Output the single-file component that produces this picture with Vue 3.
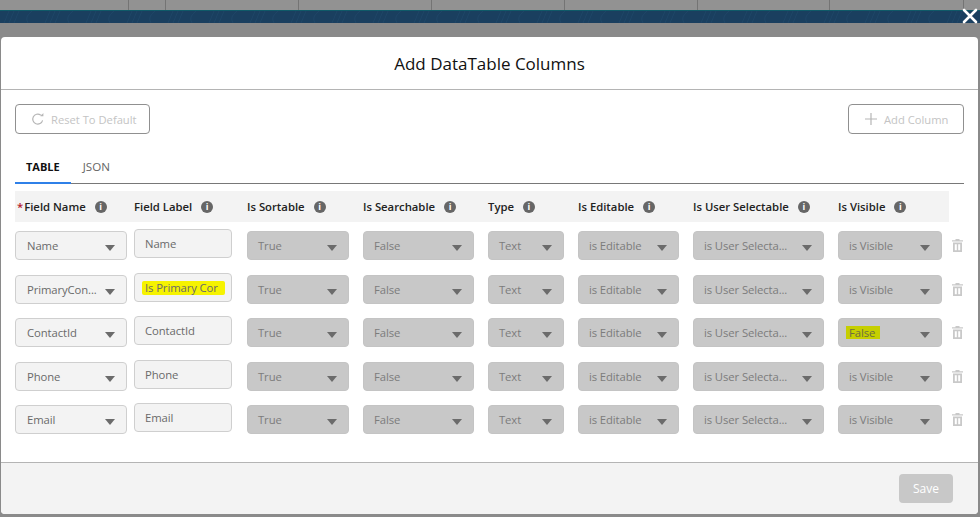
<script setup>
const stripCells = [129, 37, 133, 133, 133, 133, 132, 134]

const headers = [
  { label: 'Field Name', required: true },
  { label: 'Field Label' },
  { label: 'Is Sortable' },
  { label: 'Is Searchable' },
  { label: 'Type' },
  { label: 'Is Editable' },
  { label: 'Is User Selectable' },
  { label: 'Is Visible' },
]

const rows = [
  { name: 'Name', label: 'Name', visible: 'is Visible' },
  { name: 'PrimaryCon...', label: 'Is Primary Cor', mark: true, visible: 'is Visible' },
  { name: 'ContactId', label: 'ContactId', visible: 'False', markVisible: true },
  { name: 'Phone', label: 'Phone', visible: 'is Visible' },
  { name: 'Email', label: 'Email', visible: 'is Visible' },
]
</script>

<template>
  <div class="page">
    <div class="strip">
      <div v-for="(w, i) in stripCells" :key="i" class="strip-cell" :style="{ width: w + 'px' }"></div>
    </div>
    <div class="band">
      <svg width="980" height="12" viewBox="0 0 980 12" fill="none" stroke="#1f4667" stroke-width="1">
        <path v-for="x in 24" :key="x" :d="`M${(x - 1) * 41 + 4} 12l5-12M${(x - 1) * 41 + 9} 12l5-12M${(x - 1) * 41 + 14} 12l5-12M${(x - 1) * 41 + 28} 12q-4-6 4-12`" />
      </svg>
    </div>

    <svg class="close" width="18" height="18" viewBox="0 0 18 18" stroke="#fff" stroke-width="2.6" stroke-linecap="round">
      <path d="M3 3l12 12M15 3L3 15" />
    </svg>

    <div class="modal">
      <header class="modal-head">Add DataTable Columns</header>

      <div class="modal-body">
        <div class="actions">
          <button class="btn btn-reset">
            <svg width="14" height="14" viewBox="0 0 14 14" fill="none" stroke="#b5b5b5" stroke-width="1.2">
              <path d="M11.6 8.4A5 5 0 1 1 9.6 3L12 3.4" />
              <path d="M12.4 1v3.2H9.4" fill="#b5b5b5" stroke="none" />
            </svg>
            Reset To Default
          </button>
          <button class="btn btn-add">
            <svg width="12" height="12" viewBox="0 0 12 12" stroke="#b5b5b5" stroke-width="1.2">
              <path d="M6 0v12M0 6h12" />
            </svg>
            Add Column
          </button>
        </div>

        <div class="tabs">
          <div class="tab active">TABLE</div>
          <div class="tab">JSON</div>
        </div>

        <div class="table-head">
          <div v-for="h in headers" :key="h.label" class="th">
            <span v-if="h.required" class="req">*</span>{{ h.label }}
            <span class="info">i</span>
          </div>
        </div>

        <div v-for="row in rows" :key="row.name" class="row">
          <div class="sel sel-light"><span>{{ row.name }}</span><i class="caret"></i></div>
          <div class="inp"><span :class="{ mark: row.mark }">{{ row.label }}</span></div>
          <div class="sel"><span>True</span><i class="caret"></i></div>
          <div class="sel"><span>False</span><i class="caret"></i></div>
          <div class="sel"><span>Text</span><i class="caret"></i></div>
          <div class="sel"><span>is Editable</span><i class="caret"></i></div>
          <div class="sel"><span>is User Selecta...</span><i class="caret"></i></div>
          <div class="sel sel-last"><span :class="{ 'mark-dim': row.markVisible }">{{ row.visible }}</span><i class="caret"></i></div>
          <svg class="trash" width="11" height="13" viewBox="0 0 11 13" fill="#c9c9c9">
            <path d="M3.5 0h4v1.2h3.5v1.3H0V1.2h3.5zM1 3.4h9V13H1zM2.8 5.2v6h2v-6zM6.2 5.2v6h2v-6z" fill-rule="evenodd" />
          </svg>
        </div>
      </div>

      <footer class="modal-foot">
        <button class="btn-save">Save</button>
      </footer>
    </div>
  </div>
</template>

<style>
body {
  margin: 0;
  background: #8a8a8a;
}
</style>

<style scoped>
.page {
  position: relative;
  width: 980px;
  height: 517px;
  overflow: hidden;
  background: #8a8a8a;
  font-family: "Open Sans", "Noto Sans", sans-serif;
  color: #5c5c5c;
}
.strip {
  display: flex;
  height: 10px;
  background: #929292;
}
.strip-cell {
  border-right: 1px solid #747474;
  box-sizing: border-box;
}
.band {
  height: 13px;
  box-sizing: border-box;
  border-top: 1px solid #0f5a68;
  background: #1a3f5f;
  overflow: hidden;
}
.band svg {
  display: block;
}
.close {
  position: absolute;
  top: 7px;
  right: 1px;
}
.modal {
  margin: 14px 1px 0 1px;
  width: 977px;
  height: 477px;
  display: flex;
  flex-direction: column;
  background: #fff;
  border-radius: 4px;
  overflow: hidden;
}
.modal-head {
  height: 53px;
  flex: none;
  box-sizing: border-box;
  border-bottom: 1px solid #b4b4b4;
  padding-top: 13px;
  text-align: center;
  font-size: 17px;
  line-height: 27px;
  color: #111;
}
.modal-body {
  flex: 1;
  padding: 14px 14px 0 14px;
}
.actions {
  display: flex;
  justify-content: space-between;
}
.btn {
  display: flex;
  align-items: center;
  height: 30px;
  box-sizing: border-box;
  background: #fff;
  border: 1px solid #909090;
  border-radius: 4px;
  color: #c4c4c4;
  font: inherit;
  font-size: 11.2px;
}
.btn-reset {
  width: 135px;
  padding: 0 0 0 15px;
  gap: 6px;
}
.btn-add {
  width: 116px;
  padding: 0 0 0 16px;
  gap: 7px;
}
.tabs {
  display: flex;
  margin-top: 19px;
  height: 31px;
  box-sizing: border-box;
  border-bottom: 1px solid #787878;
}
.tab {
  padding: 0 11px;
  font-size: 11.6px;
  line-height: 28px;
  color: #666;
}
.tab.active {
  height: 31px;
  box-sizing: border-box;
  border-bottom: 2px solid #2f80e8;
  color: #111;
  font-size: 11px;
  font-weight: 700;
}
.tab:nth-child(2) {
  padding-left: 0;
  margin-left: 12px;
}
.table-head,
.row {
  display: grid;
  grid-template-columns: 119px 113px 116px 125px 90px 115px 145px 114px 12px;
}
.table-head {
  margin-top: 7px;
  width: 934px;
  height: 31px;
  background: #f3f3f3;
  align-items: center;
  grid-template-columns: 119px 113px 116px 125px 90px 115px 145px 111px;
}
.th {
  font-size: 11.3px;
  font-weight: 600;
  color: #222;
  white-space: nowrap;
  display: flex;
  align-items: center;
}
.th:first-child {
  padding-left: 2px;
}
.req {
  color: #b3202c;
  margin-right: 1px;
}
.info {
  display: inline-block;
  width: 12px;
  height: 12px;
  margin-left: 9px;
  border-radius: 50%;
  background: #666;
  color: #fff;
  font-size: 9px;
  font-weight: 700;
  line-height: 12px;
  text-align: center;
}
.row {
  height: 43.6px;
  align-items: start;
  padding-top: 9px;
  box-sizing: border-box;
}
.sel {
  position: relative;
  height: 29px;
  margin-right: 14.5px;
  box-sizing: border-box;
  padding-left: 10px;
  background: #c8c8c8;
  border: 1px solid #c4c4c4;
  border-radius: 4px;
  font-size: 11.3px;
  letter-spacing: -0.1px;
  line-height: 27px;
  color: #7c7c7c;
  white-space: nowrap;
}
.sel-light {
  margin-right: 7px;
  padding-left: 11px;
  background: #f3f3f3;
  border-color: #cfcfcf;
  color: #6a6a6a;
}
.sel-last {
  margin-right: 10px;
}
.caret {
  position: absolute;
  right: 11px;
  top: 13px;
  width: 0;
  height: 0;
  border-left: 5.5px solid transparent;
  border-right: 5.5px solid transparent;
  border-top: 6.5px solid #6b6b6b;
}
.inp {
  height: 29px;
  margin-top: -2px;
  margin-right: 15px;
  box-sizing: border-box;
  padding-left: 10px;
  background: #f3f3f3;
  border: 1px solid #cfcfcf;
  border-radius: 4px;
  font-size: 11.3px;
  letter-spacing: -0.1px;
  line-height: 28px;
  color: #6a6a6a;
  white-space: nowrap;
  overflow: hidden;
}
.inp .mark {
  display: inline-block;
  margin-left: -3px;
  padding: 0 7px 0 3px;
  line-height: 14px;
  background: #f6f300;
  border-radius: 2px;
}
.mark-dim {
  display: inline-block;
  margin-left: -3px;
  padding: 0 5px 0 3px;
  line-height: 13px;
  background: #c6cf00;
  color: #6d6d40;
}
.trash {
  margin-top: 8px;
}
.modal-foot {
  height: 52px;
  flex: none;
  box-sizing: border-box;
  background: #f3f3f3;
  border-top: 1px solid #b4b4b4;
  display: flex;
  justify-content: flex-end;
  padding: 11px 25px 0 0;
}
.btn-save {
  width: 54px;
  height: 29px;
  background: #c8c8c8;
  border: none;
  border-radius: 4px;
  color: #fff;
  font: inherit;
  font-size: 12px;
}
</style>
